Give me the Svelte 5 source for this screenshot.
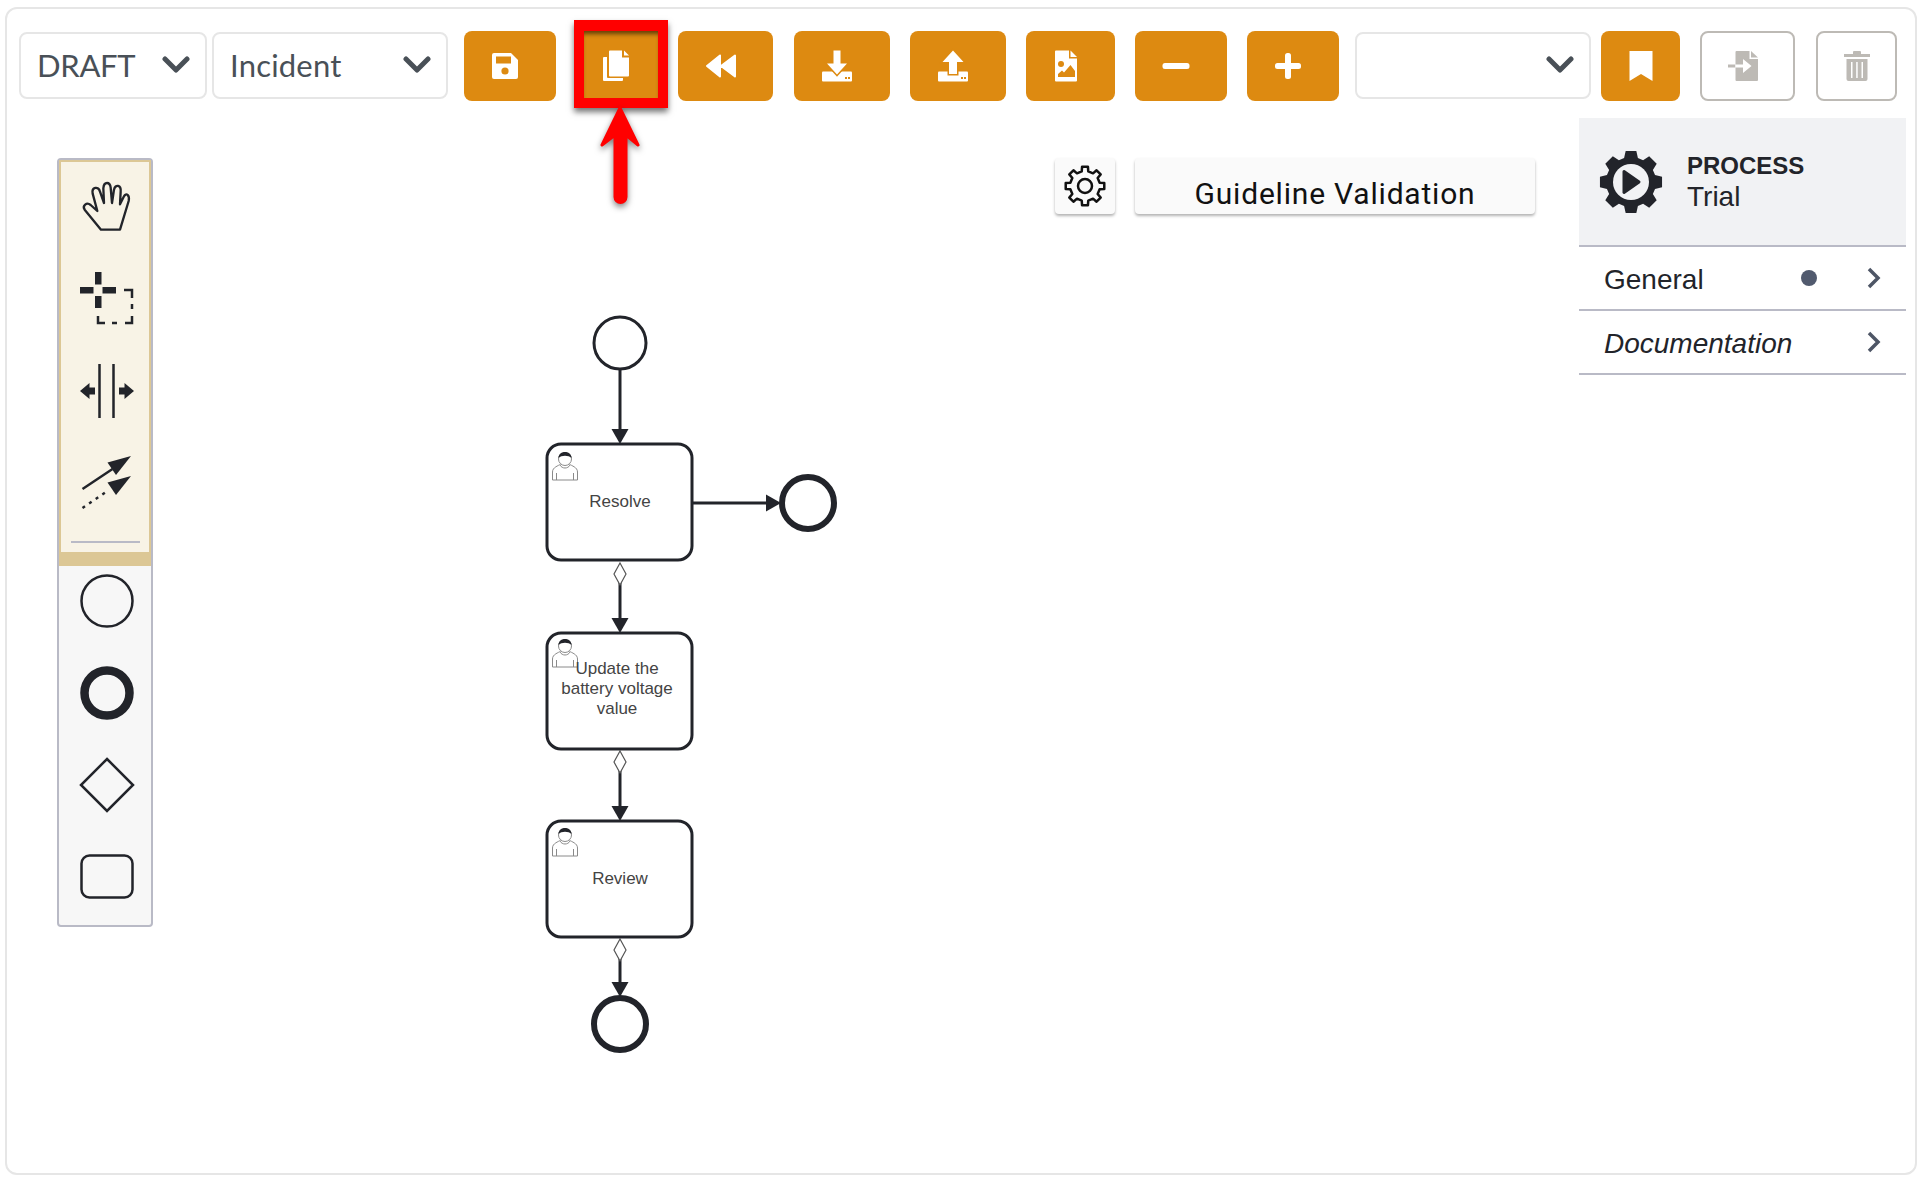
<script>
  // gear outline built from the number of teeth, used by both gear icons
  function gearPath(cx, cy, root, tip, teeth, base, top) {
    const step = (Math.PI * 2) / teeth;
    let d = "";
    for (let i = 0; i < teeth; i++) {
      const a = i * step - Math.PI / 2;
      const pts = [
        [root, a - base],
        [tip, a - top],
        [tip, a + top],
        [root, a + base],
      ];
      for (const [r, t] of pts) {
        const x = (cx + r * Math.cos(t)).toFixed(2);
        const y = (cy + r * Math.sin(t)).toFixed(2);
        d += (d ? "L" : "M") + x + " " + y;
      }
    }
    return d + "Z";
  }

  const tasks = [
    { y: 443, icon: 450, lines: [{ t: "Resolve", x: 620, y: 506 }] },
    {
      y: 632,
      icon: 637,
      lines: [
        { t: "Update the", x: 617, y: 673 },
        { t: "battery voltage", x: 617, y: 693 },
        { t: "value", x: 617, y: 713 },
      ],
    },
    { y: 820, icon: 826, lines: [{ t: "Review", x: 620, y: 883 }] },
  ];

  // vertical flows: line from y1 to the arrow tip at y2, diamond marks the conditional ones
  const flows = [
    { y1: 369, y2: 443 },
    { y1: 573, y2: 632, diamond: true },
    { y1: 761, y2: 820, diamond: true },
    { y1: 949, y2: 996, diamond: true },
  ];
</script>

<div class="frame">
  <div class="toolbar">
    <div class="select s-status">
      <span>DRAFT</span>
      <svg class="caret" viewBox="0 0 28 17"><path d="M3 3l11 11L25 3" /></svg>
    </div>
    <div class="select s-type">
      <span>Incident</span>
      <svg class="caret" viewBox="0 0 28 17"><path d="M3 3l11 11L25 3" /></svg>
    </div>

    <button class="btn b-save">
      <svg viewBox="0 0 40 40">
        <path class="w" d="M9 7h17l7 7v17a2 2 0 0 1-2 2H9a2 2 0 0 1-2-2V9a2 2 0 0 1 2-2z" />
        <rect class="o" x="11" y="10.500" width="15" height="7" />
        <circle class="o" cx="20" cy="25" r="3.600" />
      </svg>
    </button>
    <button class="btn b-copy">
      <svg viewBox="0 0 40 40">
        <path class="w" d="M14 4.500h12v7h7v18a1 1 0 0 1-1 1H14a1 1 0 0 1-1-1v-24a1 1 0 0 1 1-1z" />
        <path class="w" d="M28 4.500l5 5h-5z" />
        <path class="w" d="M11 11H8a1 1 0 0 0-1 1v22a1 1 0 0 0 1 1h18a1 1 0 0 0 1-1v-2H12a1 1 0 0 1-1-1z" />
      </svg>
    </button>
    <button class="btn b-back">
      <svg viewBox="0 0 40 40">
        <path class="w round" d="M6 20L19 9.500v21zM20 20L34 9.500v21z" />
      </svg>
    </button>
    <button class="btn b-down">
      <svg viewBox="0 0 40 40">
        <rect class="w" x="5" y="25.500" width="30" height="10" rx="1" />
        <path class="w cut" d="M16.500 4.500h7v13h6.500l-10 11-10-11h6.500z" />
        <rect class="o" x="28" y="31" width="2" height="2" />
        <rect class="o" x="31" y="31" width="2" height="2" />
      </svg>
    </button>
    <button class="btn b-up">
      <svg viewBox="0 0 40 40">
        <rect class="w" x="5" y="25.500" width="30" height="10" rx="1" />
        <path class="w cut" d="M20 4.500l10.500 11.500h-6.500v12h-8v-12H9.500z" />
        <rect class="o" x="28" y="31" width="2" height="2" />
        <rect class="o" x="31" y="31" width="2" height="2" />
      </svg>
    </button>
    <button class="btn b-file">
      <svg viewBox="0 0 40 40">
        <path class="w" d="M10 4.500h13v8h8v22a1 1 0 0 1-1 1H10a1 1 0 0 1-1-1v-29a1 1 0 0 1 1-1z" />
        <path class="w" d="M24.500 4.500l6.500 6.500h-6.500z" />
        <circle class="o" cx="15" cy="18" r="3" />
        <path class="o" d="M12 31v-3l4-3.500 2 2 6.500-7.500 4.500 6v6z" />
      </svg>
    </button>
    <button class="btn b-minus">
      <svg viewBox="0 0 40 40"><rect class="w" x="6.500" y="17" width="27" height="6" rx="2.500" /></svg>
    </button>
    <button class="btn b-plus">
      <svg viewBox="0 0 40 40">
        <rect class="w" x="7" y="17" width="26" height="6" rx="2.500" />
        <rect class="w" x="17" y="7" width="6" height="26" rx="2.500" />
      </svg>
    </button>

    <div class="select s-version">
      <span></span>
      <svg class="caret" viewBox="0 0 28 17"><path d="M3 3l11 11L25 3" /></svg>
    </div>

    <button class="btn b-mark centered">
      <svg viewBox="0 0 40 40"><path class="w" d="M8.500 5h23v30L20 28 8.500 35z" /></svg>
    </button>
    <button class="btn ghost b-import">
      <svg viewBox="0 0 40 40">
        <path class="g" d="M13.500 5h13v8h8.500v21a1 1 0 0 1-1 1H13.500a1 1 0 0 1-1-1V6a1 1 0 0 1 1-1z" />
        <path class="g" d="M28 5l7 6.500h-7z" />
        <rect class="g" x="5" y="18.500" width="7" height="3" />
        <path fill="#fff" d="M12.500 18.500H20V13l8.500 7-8.500 7v-5.500h-7.500z" />
      </svg>
    </button>
    <button class="btn ghost b-trash centered">
      <svg viewBox="0 0 40 40">
        <path class="g" d="M7 8h9V6a1 1 0 0 1 1-1h6a1 1 0 0 1 1 1v2h9v3H7z" />
        <path class="g" d="M9.500 13h21v20a2 2 0 0 1-2 2h-17a2 2 0 0 1-2-2z" />
        <rect fill="#fff" x="14" y="16" width="1.500" height="16" />
        <rect fill="#fff" x="19.200" y="16" width="1.500" height="16" />
        <rect fill="#fff" x="24.500" y="16" width="1.500" height="16" />
      </svg>
    </button>
  </div>

  <div class="body">
    <div class="palette">
      <div class="tools">
        <svg class="tool" viewBox="63 63 264 204">
          <path
            class="line hand"
            d="M183 236L134 176C126 164 140 152 152 162L172 180L158 128C154 108 176 104 180 122L192 156L190 112C192 90 210 92 212 110L216 156L222 116C226 98 244 102 242 122L240 160L252 136C258 124 270 132 266 150L240 236Z"
          />
        </svg>
        <svg class="tool" viewBox="61 263 88 68">
          <rect class="k" x="80" y="286" width="13.500" height="6.500" />
          <rect class="k" x="102.500" y="286" width="13.500" height="6.500" />
          <rect class="k" x="95" y="271" width="6.500" height="12.500" />
          <rect class="k" x="95" y="295" width="6.500" height="12" />
          <path class="line thin" d="M124 289h8v8M132 303v5M132 315v7h-7M117 322h-5M105 322h-7v-7" />
        </svg>
        <svg class="tool" viewBox="61 355 88 68">
          <path class="line thin" d="M99.500 363v54M113.500 363v54" />
          <path class="k" d="M80 390l9.500-8v4.500H95v7h-5.500v4.500zM134 390l-9.500-8v4.500H119v7h5.500v4.500z" />
        </svg>
        <svg class="tool" viewBox="61 447 88 68">
          <path class="line thin" d="M82.500 488l30-20" />
          <path class="k" d="M131 455l-23.500 6.500 8.500 12.500z" />
          <path class="line thin dots" d="M82.500 507l25-17" />
          <path class="k" d="M131 475l-23.500 6.500 8.500 12.500z" />
        </svg>
        <div class="sep"></div>
      </div>
      <div class="shapes">
        <svg class="tool" viewBox="59 566 92 68">
          <circle class="line thin" cx="107" cy="600" r="25.500" />
        </svg>
        <svg class="tool" viewBox="59 658 92 68">
          <circle class="line thick" cx="107" cy="692" r="22.500" />
        </svg>
        <svg class="tool" viewBox="59 750 92 68">
          <path class="line thin" d="M107 758l26 26-26 26-26-26z" />
        </svg>
        <svg class="tool" viewBox="59 842 92 68">
          <rect class="line thin" x="81.500" y="854.500" width="51" height="42" rx="8" />
        </svg>
      </div>
    </div>

    <div class="canvas">
      <svg class="diagram" viewBox="153 117 1426 1000">
        <circle class="flow" cx="620" cy="342" r="26" />

        {#each flows as f}
          <path class="flow" d="M620 {f.y1}V{f.y2 - 10}" />
          <path class="head" d="M620 {f.y2}l-8.500-15h17z" />
          {#if f.diamond}
            <path class="mark" d="M620 {f.y1 - 11}l6 11-6 11-6-11z" />
          {/if}
        {/each}

        <path class="flow" d="M692 502H770" />
        <path class="head" d="M781 502l-15-8.500v17z" />

        {#each tasks as task}
          <rect class="flow" x="547" y={task.y} width="145" height="116" rx="14" />
          <g transform="translate(552 {task.icon})">
            <path class="user" d="M.5 29v-8c0-5 6-6 8-8h9c2 2 8 3 8 8v8zM4.500 29v-7M21.500 29v-7M8 14c2 4 8 4 10 0" />
            <circle class="user" cx="13" cy="8" r="6.500" />
            <path fill="#22242a" d="M6.500 7c0-8 13-8 13 0-3-3-10-3-13 0z" />
          </g>
          {#each task.lines as l}
            <text class="label" x={l.x} y={l.y}>{l.t}</text>
          {/each}
        {/each}

        <circle class="end" cx="808" cy="502" r="26" />
        <circle class="end" cx="620" cy="1023" r="26" />
      </svg>

      <div class="overlay">
        <div class="raised gear-btn">
          <svg viewBox="0 0 44 44" width="44" height="44">
            <path class="gear-line" d={gearPath(22, 22, 15, 19.500, 8, 0.22, 0.15)} />
            <circle class="gear-line" cx="22" cy="22" r="7" />
          </svg>
        </div>
        <div class="raised guide">Guideline Validation</div>
      </div>
    </div>

    <div class="panel">
      <div class="panel-head">
        <svg viewBox="0 0 66 66" width="66" height="66">
          <path class="solid" d={gearPath(33, 33, 25, 31.500, 8, 0.28, 0.17)} />
          <circle cx="33" cy="33" r="18" fill="#f1f2f4" />
          <path class="solid play" d="M26 22.500L41 33 26 43.500z" />
        </svg>
        <div class="panel-title">
          <strong>PROCESS</strong>
          <span>Trial</span>
        </div>
      </div>
      <div class="row">
        <span class="name">General</span>
        <i class="dot"></i>
        <svg class="chev" viewBox="0 0 14 22"><path d="M2 2l9 9-9 9" /></svg>
      </div>
      <div class="row">
        <em class="name">Documentation</em>
        <svg class="chev" viewBox="0 0 14 22"><path d="M2 2l9 9-9 9" /></svg>
      </div>
    </div>
  </div>

  <!-- red callout drawn on top of the copy button -->
  <div class="callout"></div>
  <svg class="callout-arrow" viewBox="0 0 60 110" width="60" height="110">
    <path d="M30 3L48 40 36 30V92a5.500 5.500 0 0 1-11 0V30L12 40z" />
  </svg>
</div>

<style>
  :global(body) {
    background: #fff;
  }

  .frame {
    position: relative;
    box-sizing: border-box;
    width: 1912px;
    height: 1168px;
    margin: 7px 0 0 5px;
    border: 2px solid #e6e6e6;
    border-radius: 12px;
    font-family: "Liberation Sans", sans-serif;
    color: #22242a;
  }

  .toolbar {
    display: flex;
    align-items: flex-start;
    padding: 22px 0 0 12px;
    height: 70px;
  }

  .select {
    box-sizing: border-box;
    display: flex;
    align-items: center;
    justify-content: space-between;
    height: 67px;
    margin-top: 1px;
    padding: 0 15px 2px 16px;
    border: 2px solid #e6e6e6;
    border-radius: 8px;
    font-family: Lato, sans-serif;
    font-size: 31px;
    letter-spacing: 0.2px;
    color: #495057;
  }

  .s-status {
    width: 188px;
    letter-spacing: -0.3px;
  }

  .s-type {
    width: 236px;
    margin-left: 5px;
  }

  .s-version {
    width: 236px;
    margin-left: 16px;
  }

  .caret {
    width: 28px;
    height: 17px;
    fill: none;
    stroke: #495057;
    stroke-width: 5;
    stroke-linecap: round;
    stroke-linejoin: round;
  }

  .btn {
    box-sizing: border-box;
    display: flex;
    align-items: center;
    justify-content: center;
    height: 70px;
    padding: 0 10px 0 0;
    border: 0;
    border-radius: 8px;
    background: #dd8a11;
  }

  .btn svg {
    width: 40px;
    height: 40px;
    display: block;
  }

  .btn.centered {
    padding: 0;
  }

  .ghost {
    background: #fff;
    border: 2px solid #bdbab5;
  }

  .w {
    fill: #fff;
  }

  .o {
    fill: #dd8a11;
  }

  .g {
    fill: #bdbab5;
  }

  .round {
    stroke: #fff;
    stroke-width: 2;
    stroke-linejoin: round;
  }

  .cut {
    stroke: #dd8a11;
    stroke-width: 3;
    paint-order: stroke;
  }

  .b-save {
    width: 92px;
    margin-left: 16px;
  }

  .b-copy {
    width: 94px;
    margin-left: 18px;
  }

  .b-back {
    width: 95px;
    margin-left: 10px;
  }

  .b-down {
    width: 96px;
    margin-left: 21px;
  }

  .b-up {
    width: 96px;
    margin-left: 20px;
  }

  .b-file {
    width: 89px;
    margin-left: 20px;
  }

  .b-minus {
    width: 92px;
    margin-left: 20px;
  }

  .b-plus {
    width: 92px;
    margin-left: 20px;
  }

  .b-mark {
    width: 79px;
    margin-left: 10px;
  }

  .b-import {
    width: 95px;
    margin-left: 20px;
  }

  .b-trash {
    width: 81px;
    margin-left: 21px;
  }

  .body {
    display: flex;
    align-items: flex-start;
    margin-top: 17px;
  }

  .palette {
    box-sizing: border-box;
    width: 96px;
    margin: 40px 0 0 50px;
    border: 2px solid #b9bac6;
    border-radius: 4px;
    background: #f7f7f7;
  }

  .tools {
    display: flex;
    flex-direction: column;
    gap: 24px;
    box-sizing: border-box;
    height: 406px;
    padding-top: 10px;
    border: solid #dcc795;
    border-width: 2px 2px 14px;
    background: #f8f3e6;
  }

  .shapes {
    display: flex;
    flex-direction: column;
    gap: 24px;
    padding: 1px 0 14px;
  }

  .tool {
    display: block;
    width: 92px;
    height: 68px;
    flex: none;
  }

  .tools .tool {
    width: 88px;
  }

  .sep {
    height: 2px;
    margin: 1px 9px 0 10px;
    background: #b9bac6;
  }

  .line {
    fill: none;
    stroke: #22242a;
    stroke-width: 3;
  }

  .hand {
    stroke-width: 7;
    stroke-linejoin: round;
  }

  .thin {
    stroke-width: 2.500px;
  }

  .thick {
    stroke-width: 8.500px;
  }

  .dots {
    stroke-dasharray: 3 5;
  }

  .k {
    fill: #22242a;
  }

  .canvas {
    position: relative;
    width: 1426px;
    flex: none;
  }

  .diagram {
    display: block;
    width: 1426px;
    height: 1000px;
  }

  .flow {
    fill: none;
    stroke: #22242a;
    stroke-width: 3px;
  }

  .head {
    fill: #22242a;
  }

  .mark {
    fill: #fff;
    stroke: #555;
    stroke-width: 1.200px;
  }

  .end {
    fill: none;
    stroke: #22242a;
    stroke-width: 6px;
  }

  .user {
    fill: #fff;
    stroke: #8a8a8a;
    stroke-width: 1;
  }

  .label {
    font-size: 17px;
    fill: #444;
    text-anchor: middle;
  }

  .overlay {
    position: absolute;
    top: 40px;
    right: 44px;
    display: flex;
    gap: 20px;
  }

  .raised {
    box-sizing: border-box;
    height: 56px;
    background: #fafafa;
    border-radius: 4px;
    box-shadow: 0 2px 3px rgba(0, 0, 0, 0.3);
  }

  .gear-btn {
    display: flex;
    align-items: center;
    justify-content: center;
    width: 60px;
  }

  .gear-line {
    fill: none;
    stroke: #111;
    stroke-width: 2.500px;
    stroke-linejoin: round;
  }

  .guide {
    width: 400px;
    padding-top: 18px;
    text-align: center;
    font-family: Roboto, sans-serif;
    font-size: 30px;
    letter-spacing: 0.8px;
    line-height: 36px;
    color: #111;
  }

  .panel {
    width: 327px;
    flex: none;
  }

  .panel-head {
    display: flex;
    align-items: center;
    gap: 23px;
    box-sizing: border-box;
    height: 129px;
    padding-left: 19px;
    background: #f1f2f4;
    border-bottom: 2px solid #b9bac6;
  }

  .solid {
    fill: #22242a;
  }

  .play {
    stroke: #22242a;
    stroke-width: 3;
    stroke-linejoin: round;
  }

  .panel-title {
    display: flex;
    flex-direction: column;
  }

  .panel-title strong {
    font-size: 24px;
    line-height: 30px;
  }

  .panel-title span {
    font-size: 28px;
    line-height: 32px;
  }

  .row {
    display: flex;
    align-items: center;
    box-sizing: border-box;
    height: 64px;
    padding: 0 25px;
    border-bottom: 2px solid #b9bac6;
    font-size: 28px;
  }

  .name {
    flex: 1;
    padding-top: 3px;
  }

  .dot {
    width: 16px;
    height: 16px;
    margin-right: 50px;
    border-radius: 50%;
    background: #515a6e;
  }

  .chev {
    width: 14px;
    height: 22px;
    fill: none;
    stroke: #4e5666;
    stroke-width: 3.500px;
  }

  .callout {
    position: absolute;
    left: 567px;
    top: 11px;
    box-sizing: border-box;
    width: 94px;
    height: 88px;
    border: 10px solid #f00;
    border-top-width: 11px;
    box-shadow:
      0 4px 6px rgba(0, 0, 0, 0.55),
      inset 0 5px 4px -2px rgba(0, 0, 0, 0.55);
  }

  .callout-arrow {
    position: absolute;
    left: 583px;
    top: 96px;
    fill: #f00;
    stroke: #f00;
    stroke-width: 3;
    stroke-linejoin: round;
    filter: drop-shadow(0 3px 3px rgba(0, 0, 0, 0.5));
  }
</style>
